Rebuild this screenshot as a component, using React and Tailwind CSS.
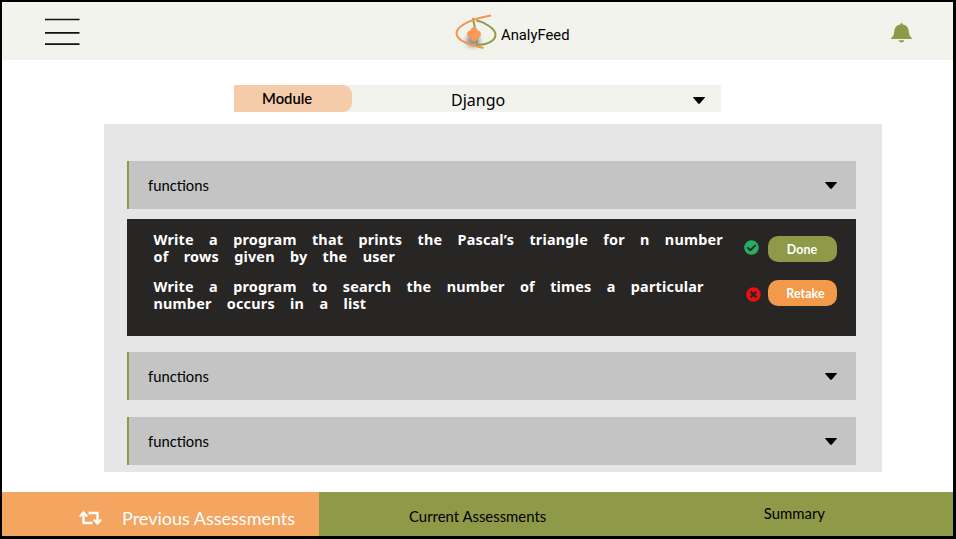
import { FaCheckCircle, FaTimesCircle } from "react-icons/fa";

function Caret() {
  return (
    <svg className="h-[7px] w-[12px] shrink-0" viewBox="0 0 12 7">
      <path d="M.6 0h10.8q.9 0 .4.8L6.8 6.5q-.8.8-1.6 0L.2.8Q-.2 0 .6 0Z" fill="#000" />
    </svg>
  );
}

function Logo() {
  return (
    <svg className="h-[40px] w-[44px] shrink-0" viewBox="0 0 44 40" fill="none">
      <defs>
        <filter id="shadow" x="-50%" y="-50%" width="200%" height="200%">
          <feGaussianBlur stdDeviation="2.2" />
        </filter>
      </defs>
      <ellipse cx="18" cy="29" rx="7" ry="6" fill="#555" opacity=".6" filter="url(#shadow)" />
      <path d="M18 6C19 13 22 24 22 33" stroke="#8F9A48" strokeWidth="1.9" />
      <path d="M21.500 8.500C30 10 40 17 40.500 22C41 29 32 33 21 33" stroke="#8F9A48" strokeWidth="1.900" />
      <path d="M36 3.500C20 6 2 13 1.500 21C1 29 16 33 28.500 36" stroke="#F5954A" strokeWidth="1.900" />
      <g fill="#F79A55">
        <circle cx="19" cy="18.800" r="3.500" />
        <circle cx="15.800" cy="22.300" r="3.700" />
        <circle cx="22.200" cy="22.300" r="3.700" />
        <circle cx="19" cy="25.800" r="3.500" />
      </g>
    </svg>
  );
}

function Section({ className }) {
  return (
    <div
      className={
        "flex h-[48px] shrink-0 items-center justify-between border-l-[2px] border-[#8F9A48] bg-[#C4C4C4] pl-[19px] pr-[19.5px] " +
        className
      }
    >
      <span className="font-['Lato',sans-serif] text-[14.8px] leading-[20px] text-black">functions</span>
      <Caret />
    </div>
  );
}

export default function App() {
  return (
    <div className="flex h-[539px] w-[956px] flex-col overflow-hidden border-y-[2px] border-b-[3px] border-l-[2px] border-r-[3px] border-black bg-white font-['Lato',sans-serif] text-black">
      <header className="flex h-[58px] shrink-0 items-start justify-between bg-[#F2F3ED] pl-[43px] pr-[41px]">
        <svg className="mt-[16px] h-[29px] w-[35px]" viewBox="0 0 35 29">
          <path d="M0 1.500h34.500M0 14.900h34.500M0 26.200h34.500" stroke="#111" strokeWidth="1.700" />
        </svg>
        <div className="ml-[55px] flex items-start pt-[10px]">
          <Logo />
          <span className="ml-[2px] mt-[13px] w-[70px] whitespace-nowrap font-['Roboto',sans-serif] text-[14.8px] leading-[20px]">
            AnalyFeed
          </span>
        </div>
        <svg className="mt-[21px] h-[20px] w-[21px]" viewBox="0 0 21 20" fill="#8F9A48">
          <path d="M10.500 0q1.300 0 1.300 1.500Q17.400 2.500 17.800 8.500Q18 13 20.800 15V16H.2v-1Q3 13 3.200 8.500Q3.600 2.500 9.200 1.500Q9.200 0 10.500 0ZM7.600 17.300h5.800q-.8 2.300-2.900 2.300t-2.900-2.300Z" />
        </svg>
      </header>

      <main className="flex flex-1 flex-col pl-[102px] pr-[71px] pt-[25px]">
        <div className="ml-[130px] flex h-[27px] w-[487px] shrink-0 items-center bg-[#F2F3ED]">
          <div className="flex h-[27px] w-[118px] items-center rounded-r-[9px] bg-[#F4CCA9] pl-[28px] font-['Lato',sans-serif] text-[14.8px] font-semibold leading-[27px]">
            Module
          </div>
          <span className="ml-[99px] pt-[3px] font-['Noto_Sans',sans-serif] text-[16px] leading-[24px]">Django</span>
          <div className="ml-auto mr-[16px] pt-[3px]">
            <Caret />
          </div>
        </div>

        <div className="mt-[12px] flex h-[348px] shrink-0 flex-col bg-[#E6E6E6] pl-[23px] pr-[26px] pt-[37px]">
          <Section className="" />
          <div className="mt-[10px] flex h-[117px] shrink-0 justify-between bg-[#272625] pl-[26.5px] pr-[19px] pt-[12px]">
            <div className="whitespace-nowrap font-['Noto_Sans',sans-serif] text-[14.4px] font-bold leading-[17.3px] tracking-[0.2px] text-white [word-spacing:11.3px]">
              <p>
                Write a program that prints the Pascal’s triangle for n number
                <br />
                of rows given by the user
              </p>
              <p className="mt-[12px]">
                Write a program to search the number of times a particular
                <br />
                number occurs in a list
              </p>
            </div>
            <div className="flex w-[93px] flex-col pt-[5px]">
              <div className="flex h-[26px] items-center justify-between">
                <FaCheckCircle className="mt-[-3px] h-[15px] w-[15px] text-[#27AE60]" />
                <button className="h-[26px] w-[69px] rounded-[10px] bg-[#8F9A48] pr-[1px] pt-[1px] text-[12.5px] font-bold leading-[25px] text-white">
                  Done
                </button>
              </div>
              <div className="mt-[18px] flex h-[26px] items-center justify-between pl-[2px]">
                <FaTimesCircle className="mt-[2px] h-[15px] w-[15px] text-[#EB0F12]" />
                <button className="h-[26px] w-[69px] rounded-[10px] bg-[#F2994A] pl-[6px] pt-[1px] text-[12.5px] font-bold leading-[25px] text-white">
                  Retake
                </button>
              </div>
            </div>
          </div>
          <Section className="mt-[16px]" />
          <Section className="mt-[17px]" />
        </div>
      </main>

      <footer className="flex h-[44px] shrink-0 bg-[#8F9A48]">
        <div className="flex w-[317px] items-center bg-[#F4A560] pl-[77px] pt-[8px] text-white">
          <svg className="h-[14px] w-[23px]" viewBox="0 0 23 14" fill="none" stroke="#fff" strokeWidth="2.300">
            <path d="M4.500 2v10H13.500M9.500 2h9v10" />
            <path d="M.8 5.500L4.500 1.500 8.200 5.500M14.800 8.500L18.500 12.500 22.200 8.500" />
          </svg>
          <span className="ml-[20px] whitespace-nowrap text-[18px] leading-[24px]">Previous Assessments</span>
        </div>
        <div className="ml-[90px] pt-[14px] text-[14.9px] leading-[20px]">Current Assessments</div>
        <div className="ml-auto mr-[128px] pt-[11px] text-[14.9px] leading-[20px]">Summary</div>
      </footer>
    </div>
  );
}
